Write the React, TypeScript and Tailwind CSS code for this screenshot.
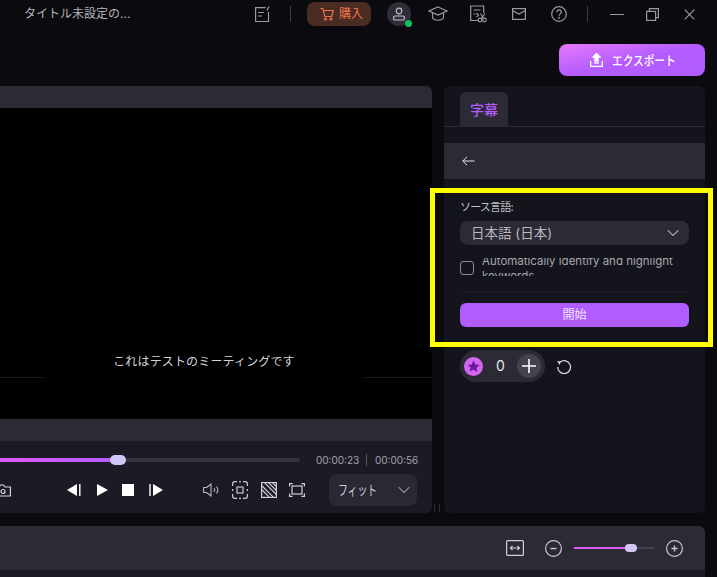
import React from "react";
import { ChevronDown } from "lucide-react";

const font = { fontFamily: '"Inter","Noto Sans CJK JP",sans-serif' };

function Ico({ w, h, className, children, sw = 1.2 }: { w: number; h: number; className?: string; children: React.ReactNode; sw?: number }) {
  return (
    <svg width={w} height={h} viewBox={`0 0 ${w} ${h}`} fill="none" stroke="currentColor" strokeWidth={sw} className={className}>
      {children}
    </svg>
  );
}

function TopBar() {
  return (
    <div className="flex h-[28px] items-center text-[#9a9aa2]">
      <div className="ml-[24px] w-[231px] text-[12px] leading-[28px] text-[#b4b4ba]">タイトル未設定の...</div>
      <Ico w={15} h={16} className="shrink-0">
        <path d="M13.500 6v9.500H.6V1.600h10" />
        <path d="M3 6.500h6M3 10h4" />
        <path d="M14 .5l-2 4" />
      </Ico>
      <div className="ml-[20px] h-[16px] w-px bg-[#3a3a42]" />
      <div className="ml-[16px] flex h-[24px] w-[64px] items-center rounded-[8px] bg-[#4a2c22] pl-[13px] text-[#e8764a]">
        <Ico w={14} h={14} className="shrink-0">
          <path d="M.5 1.500h2.300l2 8h7l1.400-6H3.600" />
          <circle cx="5.500" cy="12" r="1" />
          <circle cx="11" cy="12" r="1" />
        </Ico>
        <span className="ml-[5px] text-[12px] leading-none">購入</span>
      </div>
      <div className="relative ml-[16px] flex h-[24px] w-[24px] items-center justify-center rounded-full bg-[#2e2e38]">
        <Ico w={14} h={14} className="text-[#c0c0c6]">
          <circle cx="7" cy="4" r="2.800" />
          <rect x="1.500" y="9" width="11" height="4" rx="1.800" />
        </Ico>
        <span className="absolute right-[-1px] bottom-[-1px] h-[7px] w-[7px] rounded-full bg-[#0fc35a]" />
      </div>
      <Ico w={20} h={16} className="ml-[17px] shrink-0">
        <path d="M10 1L19 5l-9 4-9-4z" />
        <path d="M4.500 7v5c2 3 9 3 11 0V7" />
      </Ico>
      <Ico w={17} h={18} className="ml-[22px] shrink-0">
        <path d="M8 15.500H.7V1h13v7" />
        <path d="M3.500 5h7M3.500 9h2M6.500 8l2 2-2 2" />
        <circle cx="10" cy="15" r="1.800" />
        <circle cx="14.500" cy="15" r="1.800" />
        <path d="M10.500 8.500l3 5M15 8.500l-3.500 5" />
      </Ico>
      <Ico w={14} h={12} className="ml-[25px] shrink-0">
        <rect x=".6" y=".6" width="12.800" height="10.800" />
        <path d="M.6 2.500L7 6l6.400-3.500" />
      </Ico>
      <Ico w={16} h={16} className="ml-[25px] shrink-0">
        <circle cx="8" cy="8" r="7.300" />
        <path d="M5.800 6.200c0-3 4.500-3 4.500 0 0 1.700-2.300 1.700-2.300 3.600" />
        <circle cx="8" cy="11.800" r=".4" />
      </Ico>
      <div className="ml-[20px] h-[16px] w-px bg-[#3a3a42]" />
      <div className="ml-[22px] h-px w-[14px] bg-[#9a9aa2]" />
      <Ico w={13} h={13} className="ml-[22px] shrink-0">
        <rect x=".6" y="3.400" width="9" height="9" />
        <path d="M3.400 3.400V.6h9v9H9.600" />
      </Ico>
      <Ico w={11} h={11} className="ml-[25px] shrink-0">
        <path d="M.7.7l9.600 9.600M10.300.7L.7 10.300" />
      </Ico>
    </div>
  );
}

function ExportRow() {
  return (
    <div className="flex h-[58px] items-start justify-end pt-[16px] pr-[12px]">
      <div className="flex h-[32px] w-[146px] items-center rounded-[8px] bg-gradient-to-br from-[#e879f9] via-[#b45cff] to-[#b05cff] pl-[31px] text-white">
        <Ico w={13} h={14} sw={1.300} className="shrink-0">
          <path d="M6.500.5L10 4H8v4H5V4H3z" fill="currentColor" />
          <path d="M4 10h5" />
          <path d="M.7 8v5.300h11.600V8" />
        </Ico>
        <span className="ml-[9px] origin-left scale-x-[0.82] whitespace-nowrap text-[13px] font-medium leading-none">エクスポート</span>
      </div>
    </div>
  );
}

function Transport() {
  return (
    <div className="flex h-[72px] flex-col bg-[#1c1b25]">
      <div className="flex h-[27px] shrink-0 items-end">
        <div className="relative mb-[6px] h-[4px] w-[300px] rounded-r-full bg-[#33323d]">
          <div className="h-full w-[118px] bg-gradient-to-r from-[#e058f5] to-[#b45cff]" />
          <div className="absolute top-[-3px] left-[110px] h-[10px] w-[16px] rounded-full bg-[#cfc6f5]" />
        </div>
        <div className="mb-[2px] ml-[16px] flex items-center text-[10px] leading-[12px] text-[#a2a2ac]">
          <span className="w-[42px]">00:00:23</span>
          <span className="mx-[8px] h-[12px] w-px bg-[#55555e]" />
          <span>00:00:56</span>
        </div>
      </div>
      <div className="flex h-[45px] items-center pb-[1px] text-[#d8d8dc]">
        <Ico w={11} h={13} className="shrink-0">
          <path d="M-4 3h3l1.500-2h3L5 3h5.400v9H-4z" />
          <circle cx="3" cy="7.500" r="2" />
        </Ico>
        <Ico w={14} h={12} className="ml-[56px] shrink-0 text-white" sw={1}>
          <path d="M10 0v12L0 6z" fill="currentColor" stroke="none" />
          <path d="M12.800 0v12" strokeWidth={1.400} />
        </Ico>
        <Ico w={11} h={12} className="ml-[16px] shrink-0 text-white">
          <path d="M0 0l11 6-11 6z" fill="currentColor" stroke="none" />
        </Ico>
        <div className="ml-[14px] h-[12px] w-[12px] shrink-0 bg-white" />
        <Ico w={14} h={12} className="ml-[15px] shrink-0 text-white" sw={1}>
          <path d="M4 0v12l10-6z" fill="currentColor" stroke="none" />
          <path d="M1 0v12" strokeWidth={1.400} />
        </Ico>
        <Ico w={18} h={14} className="ml-[40px] shrink-0 text-[#b8b8be]" sw={1.100}>
          <path d="M.6 4.500h3L8 1v12L3.600 9.500h-3z" />
          <path d="M11 5c1 1.300 1 2.700 0 4M13.500 3.500c1.700 2.200 1.700 4.800 0 7" />
        </Ico>
        <Ico w={16} h={18} className="ml-[11px] shrink-0 text-[#c8c8cc]">
          <path d="M.6 5V3Q.6.6 3 .6h2M11 .6h2q2.400 0 2.400 2.400V5M.6 8v2M15.400 8v2M.6 13v2q0 2.400 2.400 2.400h2M11 17.400h2q2.400 0 2.400-2.400v-2M7 .6h2M7 17.400h2" />
          <rect x="5" y="6" width="6" height="6" />
        </Ico>
        <Ico w={16} h={16} className="ml-[13px] shrink-0 text-[#d0d0d4]">
          <rect x=".6" y=".6" width="14.800" height="14.800" />
          <path d="M.6 3.500L12.500 15.400M.6 7.500l7.900 7.900M3.500.6l11.900 11.900M7.500.6l7.900 7.900M11.500.6l3.900 3.900" />
        </Ico>
        <Ico w={16} h={14} className="ml-[12px] shrink-0 text-[#d0d0d4]">
          <path d="M.6 3.500V.6h3M12.400.6h3v2.900M.6 10.500v2.900h3M12.400 13.400h3v-2.900" />
          <rect x="3" y="3" width="10" height="8" />
        </Ico>
        <div className="ml-[24px] flex h-[32px] w-[88px] shrink-0 items-center rounded-[8px] bg-[#2a2933] pl-[9px] pr-[7px] text-[14px] text-[#d0d0d8]">
          <span className="flex-1 origin-left scale-x-[0.7] whitespace-nowrap leading-none">フィット</span>
          <ChevronDown size={20} strokeWidth={1.300} className="shrink-0 text-[#8a8a92]" />
        </div>
      </div>
    </div>
  );
}

function LeftPanel() {
  return (
    <div className="flex w-[432px] flex-col overflow-hidden rounded-tr-[6px] rounded-br-[6px]">
      <div className="h-[22px] bg-[#2c2b35]" />
      <div className="flex h-[311px] flex-col justify-end bg-black">
        <div className="flex w-full items-end">
          <div className="h-px w-[43px] bg-[#1a1a1f]" />
          <div className="w-[322px] pb-[7px] text-center text-[12px] leading-[18px] tracking-[0.15px] text-[#d4d4d8]">
            これはテストのミーティングです
          </div>
          <div className="h-px flex-1 bg-[#1a1a1f]" />
        </div>
        <div className="h-[41px]" />
      </div>
      <div className="h-[22px] bg-[#2c2b35]" />
      <Transport />
    </div>
  );
}

function RightPanel() {
  return (
    <div className="relative ml-[12px] flex w-[261px] flex-col rounded-[6px] bg-[#14141c]">
      <div className="flex h-[41px] items-end border-b border-[#2c2b35] pl-[16px]">
        <div className="flex h-[34px] w-[48px] items-center justify-center rounded-t-[6px] bg-[#2c2b35] text-[14px] font-medium text-[#b45cff]">
          字幕
        </div>
      </div>
      <div className="mt-[16px] flex h-[36px] items-center bg-[#2c2b35] pl-[18px] text-[#e8e8ea]">
        <Ico w={13} h={10} sw={1}>
          <path d="M12.500 5H.8M5 .8L.8 5 5 9.200" />
        </Ico>
      </div>
      <div className="px-[16px] pt-[20px]">
        <div className="text-[11px] leading-[16px] tracking-[-0.8px] text-[#c0c0c6]">ソース言語:</div>
        <div className="mt-[6px] flex h-[24px] items-center justify-between rounded-[8px] bg-[#2c2b35] pl-[11px] pr-[6px] text-[13.500px] text-[#b8b8be]">
          <span>日本語 (日本)</span>
          <ChevronDown size={20} strokeWidth={1.300} className="text-[#a0a0a6]" />
        </div>
        <div className="mt-[13px] flex h-[18px] items-center">
          <div className="mt-[2px] h-[14px] w-[14px] shrink-0 rounded-[3px] border border-[#8c8c92]" />
          <div className="ml-[8px] h-[18px] overflow-hidden text-[11.500px] leading-[15px] text-[#a8a8b0]">
            <div className="mt-[-4px]">Automatically identify and highlight keywords</div>
          </div>
        </div>
        <div className="mt-[15px] h-px bg-[#1e1e27]" />
        <div className="mt-[11px] flex h-[24px] items-center justify-center rounded-[6px] bg-[#b05cff] text-[12px] text-[#f0e6ff]">
          開始
        </div>
        <div className="mt-[23px] flex items-center">
          <div className="flex h-[32px] w-[85px] items-center rounded-full bg-[#2c2b35] pl-[4px]">
            <div className="flex h-[19px] w-[19px] items-center justify-center rounded-full bg-[#d266f0]">
              <svg width="13" height="13" viewBox="0 0 24 24" className="text-[#6a189e]" fill="currentColor">
                <path d="M12 1l3.400 7.200 7.600 1-5.600 5.400 1.500 7.800L12 17.600l-6.900 3.800 1.500-7.800L1 9.200l7.600-1z" />
              </svg>
            </div>
            <span className="ml-[13px] text-[14px] leading-none text-[#e8e8ea]">0</span>
            <div className="ml-[12px] flex h-[24px] w-[24px] items-center justify-center rounded-full bg-[#44434d]">
              <Ico w={14} h={14} sw={1.600} className="text-white">
                <path d="M7 0v14M0 7h14" />
              </Ico>
            </div>
          </div>
          <Ico w={16} h={15} className="ml-[11px] text-[#e0e0e4]">
            <path d="M4 3.200A6.400 6.400 0 1 1 1.700 8" />
            <path d="M1 1.800l3.800 1-1.200 3.200z" fill="currentColor" stroke="none" />
          </Ico>
        </div>
      </div>
      <div className="pointer-events-none absolute top-[102px] left-[-14px] h-[159px] w-[283px] border-[5px] border-[#ffff00]" />
      <div className="absolute bottom-[1px] left-[-10px] h-[8px] w-[6px] border-x border-[#2c2b35]" />
    </div>
  );
}

function Timeline() {
  return (
    <div className="flex w-[705px] flex-col">
      <div className="flex h-[44px] items-center rounded-tr-[6px] bg-[#2c2b35] pl-[506px] text-[#c8c8cc]">
        <Ico w={18} h={16} className="shrink-0 text-[#d0d0d4]">
          <rect x=".6" y=".6" width="16.800" height="14.800" rx="1" />
          <path d="M5 8h8M6.500 6L4.500 8l2 2M11.500 6l2 2-2 2" />
        </Ico>
        <Ico w={17} h={17} className="ml-[21px] shrink-0">
          <circle cx="8.500" cy="8.500" r="7.900" />
          <path d="M5.500 8.500h6" strokeWidth={1.400} />
        </Ico>
        <div className="relative ml-[12px] h-[2px] w-[80px] shrink-0 bg-[#44434d]">
          <div className="h-full w-[57px] bg-[#dc5cf5]" />
          <div className="absolute top-[-3px] left-[51px] h-[8px] w-[12px] rounded-full bg-[#cfc6f5]" />
        </div>
        <Ico w={17} h={17} className="ml-[12px] shrink-0">
          <circle cx="8.500" cy="8.500" r="7.900" />
          <path d="M5.500 8.500h6M8.500 5.500v6" strokeWidth={1.400} />
        </Ico>
      </div>
      <div className="h-[7px] bg-[#1c1b25]" />
    </div>
  );
}

export default function App() {
  return (
    <div className="flex h-[577px] w-[717px] flex-col overflow-hidden bg-[#0a0a0f]" style={font}>
      <TopBar />
      <ExportRow />
      <div className="flex h-[427px]">
        <LeftPanel />
        <RightPanel />
      </div>
      <div className="h-[13px]" />
      <Timeline />
    </div>
  );
}
